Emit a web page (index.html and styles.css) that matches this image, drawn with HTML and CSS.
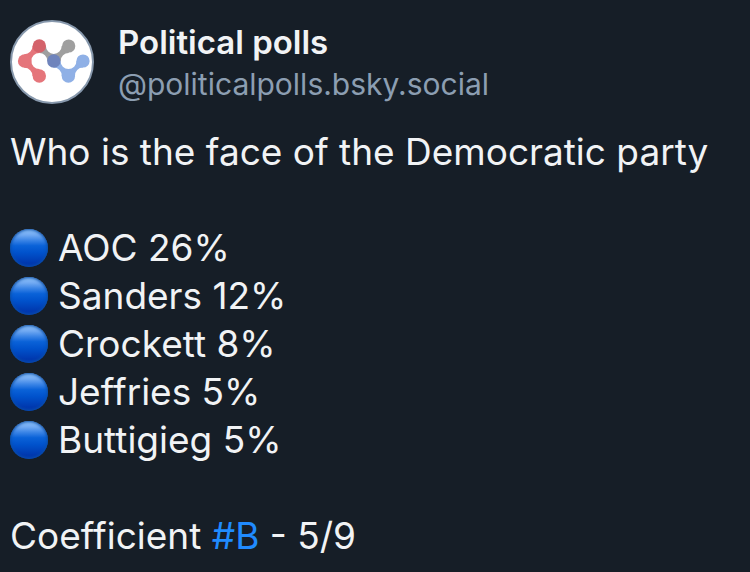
FILE: index.html
```html
<!DOCTYPE html>
<html lang="en">
<head>
  <meta charset="UTF-8" />
  <meta name="viewport" content="width=device-width, initial-scale=1" />
  <title>Political polls</title>
  <link rel="stylesheet" href="styles.css">
</head>
<body>

  <article class="post">
    <header class="author">
      <svg class="avatar" viewBox="0 0 84 84" role="img" aria-label="Political polls logo">
        <circle cx="42" cy="42" r="41" fill="#fff" stroke="#8798ac" stroke-width="2" />
        <!-- grey links -->
        <g fill="#9f9f9f">
          <path d="M35.9 26A7.9 7.9 0 0 0 51.7 26H58.7V33A8 8 0 0 0 50.7 41H37.3A8 8 0 0 0 29.3 33V26Z" />
          <circle cx="58.7" cy="26" r="6.6" />
        </g>
        <!-- red branch -->
        <g fill="#e5757b">
          <path d="M14.3 34.2A8 8 0 0 0 22.5 26H29.3V33A8 8 0 0 0 29.3 49V56H22.5A8 8 0 0 0 14.3 47.8Z" />
          <circle cx="14.7" cy="41" r="6.8" />
          <circle cx="29.3" cy="56" r="6.7" />
        </g>
        <circle cx="29.3" cy="26" r="6.7" fill="#d4626a" />
        <!-- blue branch -->
        <g fill="#8fb0e6">
          <path d="M50.5 41A8 8 0 0 0 66.5 41H73V47.6A8 8 0 0 0 65 56H51.7A8 8 0 0 0 43.7 47.6V41Z" />
          <circle cx="73" cy="41" r="6.6" />
          <circle cx="58.4" cy="56" r="6.7" />
        </g>
        <circle cx="43.8" cy="41" r="6.7" fill="#6f84bc" />
      </svg>
      <div class="names">
        <div class="name">Political polls</div>
        <div class="handle">@politicalpolls.bsky.social</div>
      </div>
    </header>

    <p class="text">Who is the face of the Democratic party</p>

    <ul class="results">
      <li><span class="dot"></span>AOC 26%</li>
      <li><span class="dot"></span>Sanders 12%</li>
      <li><span class="dot"></span>Crockett 8%</li>
      <li><span class="dot"></span>Jeffries 5%</li>
      <li><span class="dot"></span>Buttigieg 5%</li>
    </ul>

    <p class="text">Coefficient <a href="#B">#B</a> - 5/9</p>
  </article>

</body>
</html>
```

FILE: styles.css
```css
body {
  margin: 0;
  background-color: #161e27;
  color: #f1f3f5;
  font-family: Inter, "Liberation Sans", sans-serif;
}

.post {
  padding: 20px 10px 12px;
  font-size: 37px;
  line-height: 48px;
}

.author {
  display: flex;
  align-items: center;
  gap: 24px;
  margin-bottom: 24px;
}

.avatar {
  width: 84px;
  height: 84px;
  flex-shrink: 0;
}

.name {
  font-size: 33px;
  line-height: 44px;
  font-weight: 600;
}

.handle {
  color: #8c9eb2;
  font-size: 30px;
  line-height: 40px;
}

.text {
  margin: 0;
}

.text a {
  color: #208bfe;
  text-decoration: none;
}

.results {
  list-style: none;
  margin: 48px 0;
  padding: 0;
}

.results li {
  display: flex;
  align-items: center;
  gap: 10px;
}

/* glossy blue ball */
.dot {
  width: 38px;
  height: 38px;
  border-radius: 50%;
  background: linear-gradient(#8cc0fa 4%, #70a9f2 16%, #3a84e6 30%, #0a62d8 44%, #0052cc 62%, #0038ae 90%);
  box-shadow: inset 0 0 3px 1px #0a4fa8;
}
```
